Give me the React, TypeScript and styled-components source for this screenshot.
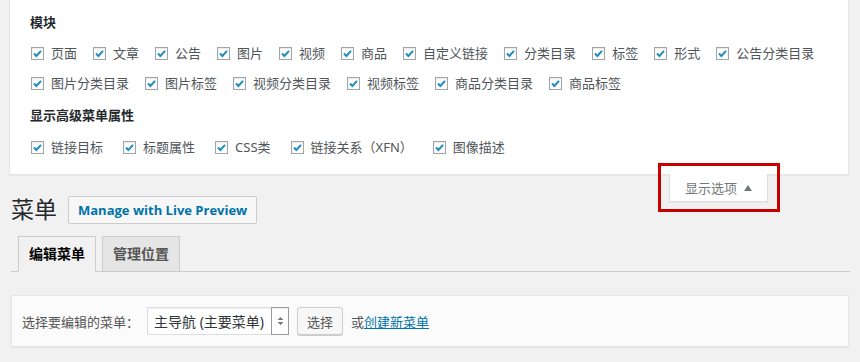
import styled, { createGlobalStyle } from "styled-components";

const GlobalStyle = createGlobalStyle`
  html, body {
    margin: 0;
    padding: 0;
    background: #f1f1f1;
  }
  body {
    font-family: "Noto Sans", "Noto Sans CJK SC", sans-serif;
    font-size: 13px;
    color: #444;
  }
`;

const moduleItems = [
  "页面",
  "文章",
  "公告",
  "图片",
  "视频",
  "商品",
  "自定义链接",
  "分类目录",
  "标签",
  "形式",
  "公告分类目录",
  "图片分类目录",
  "图片标签",
  "视频分类目录",
  "视频标签",
  "商品分类目录",
  "商品标签",
];

const advancedItems = ["链接目标", "标题属性", "CSS类", "链接关系（XFN）", "图像描述"];

function CheckBox() {
  return (
    <Box>
      <svg width="11" height="11" viewBox="0 0 11 11">
        <path d="M2 5.5 L4.4 8 L9 2.8" fill="none" stroke="#1e8cbe" strokeWidth="2" />
      </svg>
    </Box>
  );
}

export default function App() {
  return (
    <>
      <GlobalStyle />
      <Page>
        <Panel>
          <PanelHeading>模块</PanelHeading>
          <Options $gap={16}>
            {moduleItems.map((item) => (
              <Option key={item}>
                <CheckBox />
                {item}
              </Option>
            ))}
          </Options>
          <PanelHeading $spaced>显示高级菜单属性</PanelHeading>
          <Options $gap={20} $spaced>
            {advancedItems.map((item) => (
              <Option key={item}>
                <CheckBox />
                {item}
              </Option>
            ))}
          </Options>
          <ScreenTab>
            显示选项
            <svg width="8" height="6" viewBox="0 0 8 6">
              <path d="M0 6 L4 0 L8 6 Z" fill="#72777c" />
            </svg>
            <Highlight />
          </ScreenTab>
        </Panel>

        <Wrap>
          <TitleRow>
            <Title>菜单</Title>
            <ActionButton>Manage with Live Preview</ActionButton>
          </TitleRow>

          <TabNav>
            <Tab $active>编辑菜单</Tab>
            <Tab>管理位置</Tab>
          </TabNav>

          <ManageBox>
            <span>选择要编辑的菜单：</span>
            <Select>
              <SelectText>主导航 (主要菜单)</SelectText>
              <SelectArrows>
                <svg width="7" height="10" viewBox="0 0 7 10">
                  <path d="M0.5 4 L3.5 1 L6.5 4 Z M0.5 6 L3.5 9 L6.5 6 Z" fill="#777" />
                </svg>
              </SelectArrows>
            </Select>
            <Button>选择</Button>
            <span>
              或<Link href="#">创建新菜单</Link>
            </span>
          </ManageBox>
        </Wrap>
      </Page>
    </>
  );
}

const Page = styled.div`
  padding: 0 10px 20px 9px;
`;

const Panel = styled.div`
  position: relative;
  margin-right: 1px;
  padding: 12px 20px 12px 20px;
  background: #fff;
  border: 1px solid #e5e5e5;
  border-top: none;
  box-shadow: 0 1px 1px rgba(0, 0, 0, 0.04);
`;

const PanelHeading = styled.h5<{ $spaced?: boolean }>`
  margin: ${(p) => (p.$spaced ? "7px" : "0")} 0 0;
  font-size: 13px;
  line-height: 20px;
  font-weight: 600;
  color: #23282d;
`;

const Options = styled.div<{ $gap: number; $spaced?: boolean }>`
  display: flex;
  flex-wrap: wrap;
  column-gap: ${(p) => p.$gap}px;
  margin-top: ${(p) => (p.$spaced ? "7px" : "6px")};
  padding-left: 1px;
`;

const Option = styled.label`
  display: flex;
  align-items: center;
  gap: 7px;
  height: 30px;
  line-height: 30px;
  color: #50555a;
  white-space: nowrap;
`;

const Box = styled.span`
  display: flex;
  align-items: center;
  justify-content: center;
  box-sizing: border-box;
  width: 13px;
  height: 13px;
  border: 1px solid #a0a5aa;
  background: #fff;
  box-shadow: inset 0 1px 2px rgba(0, 0, 0, 0.1);
`;

const ScreenTab = styled.div`
  position: absolute;
  top: 100%;
  right: 80px;
  display: flex;
  align-items: center;
  gap: 7px;
  box-sizing: border-box;
  height: 28px;
  padding: 0 15px;
  background: #fff;
  border: 1px solid #ddd;
  border-top: none;
  box-shadow: 0 1px 1px rgba(0, 0, 0, 0.04);
  color: #72777c;
  font-size: 13px;
`;

const Highlight = styled.span`
  position: absolute;
  left: -12px;
  top: -11px;
  right: -13px;
  bottom: -11px;
  border: 3px solid #c70000;
  pointer-events: none;
`;

const Wrap = styled.div`
  margin-left: 2px;
  padding-top: 20px;
`;

const TitleRow = styled.div`
  display: flex;
  align-items: center;
  gap: 11px;
`;

const Title = styled.h1`
  margin: 0;
  font-size: 23px;
  line-height: 29px;
  font-weight: 400;
  color: #23282d;
`;

const ActionButton = styled.a`
  display: inline-flex;
  align-items: center;
  box-sizing: border-box;
  height: 28px;
  padding: 0 9px;
  border: 1px solid #ccc;
  border-radius: 2px;
  background: #f7f7f7;
  color: #0073aa;
  font-family: "Open Sans", "Noto Sans CJK SC", sans-serif;
  font-size: 13px;
  font-weight: 700;
  text-decoration: none;
`;

const TabNav = styled.div`
  display: flex;
  gap: 6px;
  margin-top: 12px;
  padding-left: 7px;
  border-bottom: 1px solid #ccc;
`;

const Tab = styled.a<{ $active?: boolean }>`
  margin-bottom: -1px;
  padding: 5px 10px;
  line-height: 24px;
  border: 1px solid #ccc;
  border-bottom-color: ${(p) => (p.$active ? "#f1f1f1" : "#ccc")};
  background: ${(p) => (p.$active ? "#f1f1f1" : "#e5e5e5")};
  color: ${(p) => (p.$active ? "#000" : "#555")};
  font-size: 14px;
  font-weight: 600;
  text-decoration: none;
`;

const ManageBox = styled.div`
  display: flex;
  align-items: center;
  gap: 8px;
  box-sizing: border-box;
  height: 52px;
  margin: 23px 1px 0 0;
  padding: 0 10px;
  background: #fbfbfb;
  border: 1px solid #e5e5e5;
  box-shadow: 0 1px 1px rgba(0, 0, 0, 0.04);
  color: #555;
  font-size: 13px;
`;

const Select = styled.div`
  display: flex;
  align-items: center;
  box-sizing: border-box;
  width: 142px;
  height: 28px;
  border: 1px solid #ddd;
  background: #fff;
  box-shadow: inset 0 1px 2px rgba(0, 0, 0, 0.07);
`;

const SelectText = styled.span`
  flex: 1;
  padding-left: 6px;
  color: #32373c;
  font-size: 14px;
  white-space: nowrap;
`;

const SelectArrows = styled.span`
  display: flex;
  align-items: center;
  justify-content: center;
  align-self: stretch;
  width: 16px;
  margin: -1px -1px -1px 0;
  border: 1px solid #999;
`;

const Button = styled.button`
  box-sizing: border-box;
  height: 28px;
  padding: 0 9px;
  border: 1px solid #ccc;
  border-radius: 3px;
  background: #f7f7f7;
  box-shadow: 0 1px 0 #ccc;
  color: #555;
  font-family: inherit;
  font-size: 13px;
`;

const Link = styled.a`
  color: #0073aa;
  text-decoration: underline;
`;
